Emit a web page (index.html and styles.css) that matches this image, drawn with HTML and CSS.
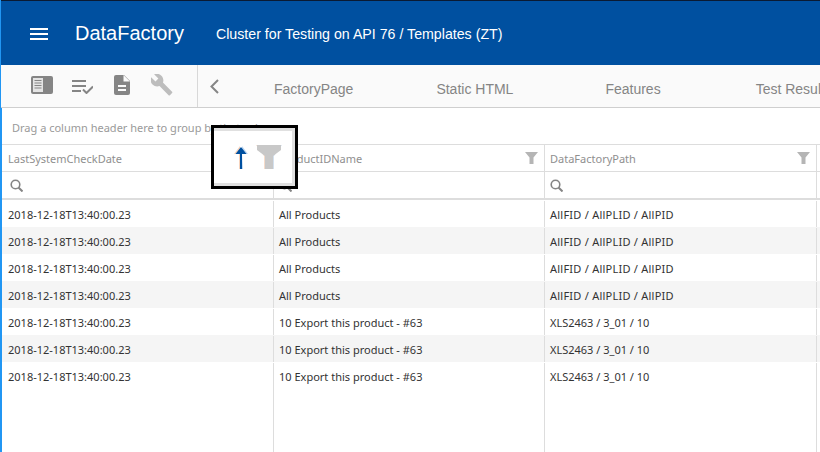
FILE: index.html
```html
<!DOCTYPE html>
<html>
    <head>
        <title>DataFactory</title>
        <meta name="viewport" content="width=device-width, initial-scale=1.0">
        <link rel="stylesheet" href="styles.css">
    </head>
    <body>
        <header class="topbar">
            <svg class="menu-icon" width="18" height="12" viewBox="0 0 18 12"><path d="M0 0h18v2H0zM0 5h18v2H0zM0 10h18v2H0z" fill="#fff"/></svg>
            <span class="brand">DataFactory</span>
            <span class="crumb">Cluster for Testing on API 76 / Templates (ZT)</span>
        </header>
        <nav class="toolbar">
            <div class="tools">
                <svg width="22" height="18" viewBox="0 0 22 18"><rect width="22" height="18" rx="2" fill="#858585"/><rect x="2" y="2" width="10" height="14" fill="#e4e4e4"/><path d="M3.500 4h7v1h-7zM3.500 6.500h7v1h-7zM3.500 9h7v1h-7zM3.500 11.500h7v1h-7z" fill="#858585"/></svg>
                <svg class="tool-check" width="21" height="14" viewBox="0 0 21 14"><path d="M0 0h14v2H0zM0 5h14v2H0zM0 10h9v2H0z" fill="#858585"/><path d="M11 9.500l3.500 3.500L21 6.500" fill="none" stroke="#858585" stroke-width="2"/></svg>
                <svg width="16" height="20" viewBox="0 0 16 20"><path d="M2 0h8l6 6v12a2 2 0 0 1-2 2H2a2 2 0 0 1-2-2V2a2 2 0 0 1 2-2z" fill="#858585"/><path d="M9.500 0v6.500H16" fill="#fafafa"/><path d="M4 10h8v2H4zM4 14h8v2H4z" fill="#fafafa"/></svg>
                <svg width="22" height="22" viewBox="0 0 23 23"><path d="M22 18.500L12.500 9c.9-2.500.4-5.300-1.600-7.300C8.800-.4 5.700-.8 3.200.3l4.500 4.500-3 3L.1 3.300C-1 5.800-.5 8.900 1.600 11c2 2 4.800 2.500 7.300 1.600l9.500 9.500c.4.400 1 .4 1.400 0l2.200-2.200c.5-.4.500-1 0-1.400z" fill="#bdbdbd"/></svg>
            </div>
            <div class="tabs">
                <svg class="tab-back" width="9" height="15" viewBox="0 0 9 15"><path d="M8 1L1.500 7.500 8 14" fill="none" stroke="#858585" stroke-width="2"/></svg>
                <span class="tab tab-factory">FactoryPage</span>
                <span class="tab tab-static">Static HTML</span>
                <span class="tab tab-features">Features</span>
                <span class="tab tab-results">Test Results</span>
            </div>
        </nav>
        <div class="group-panel">Drag a column header here to group by that column</div>
        <div class="grid">
            <div class="row head">
                <div class="cell c1">LastSystemCheckDate</div>
                <div class="cell c2">ProductIDName<svg class="funnel" width="13" height="12" viewBox="0 0 13 12"><path d="M0 0h13L8.500 5.500V12h-4V5.500z" fill="#b5b5b5"/></svg></div>
                <div class="cell c3">DataFactoryPath<svg class="funnel" width="13" height="12" viewBox="0 0 13 12"><path d="M0 0h13L8.500 5.500V12h-4V5.500z" fill="#b5b5b5"/></svg></div>
                <div class="cell c4"></div>
            </div>
            <div class="row search">
                <div class="cell c1"><svg width="13" height="13" viewBox="0 0 13 13"><circle cx="5.500" cy="5.500" r="4.300" fill="none" stroke="#858585" stroke-width="1.600"/><path d="M8.500 8.500l4 4" stroke="#858585" stroke-width="2"/></svg></div>
                <div class="cell c2"><svg width="13" height="13" viewBox="0 0 13 13"><circle cx="5.500" cy="5.500" r="4.300" fill="none" stroke="#858585" stroke-width="1.600"/><path d="M8.500 8.500l4 4" stroke="#858585" stroke-width="2"/></svg></div>
                <div class="cell c3"><svg width="13" height="13" viewBox="0 0 13 13"><circle cx="5.500" cy="5.500" r="4.300" fill="none" stroke="#858585" stroke-width="1.600"/><path d="M8.500 8.500l4 4" stroke="#858585" stroke-width="2"/></svg></div>
                <div class="cell c4"></div>
            </div>
            <div class="row data"><div class="cell c1">2018-12-18T13:40:00.23</div><div class="cell c2">All Products</div><div class="cell c3 all-path">AllFID / AllPLID / AllPID</div><div class="cell c4"></div></div>
            <div class="row data alt"><div class="cell c1">2018-12-18T13:40:00.23</div><div class="cell c2">All Products</div><div class="cell c3 all-path">AllFID / AllPLID / AllPID</div><div class="cell c4"></div></div>
            <div class="row data"><div class="cell c1">2018-12-18T13:40:00.23</div><div class="cell c2">All Products</div><div class="cell c3 all-path">AllFID / AllPLID / AllPID</div><div class="cell c4"></div></div>
            <div class="row data alt"><div class="cell c1">2018-12-18T13:40:00.23</div><div class="cell c2">All Products</div><div class="cell c3 all-path">AllFID / AllPLID / AllPID</div><div class="cell c4"></div></div>
            <div class="row data"><div class="cell c1">2018-12-18T13:40:00.23</div><div class="cell c2">10 Export this product - #63</div><div class="cell c3">XLS2463 / 3_01 / 10</div><div class="cell c4"></div></div>
            <div class="row data alt"><div class="cell c1">2018-12-18T13:40:00.23</div><div class="cell c2">10 Export this product - #63</div><div class="cell c3">XLS2463 / 3_01 / 10</div><div class="cell c4"></div></div>
            <div class="row data"><div class="cell c1">2018-12-18T13:40:00.23</div><div class="cell c2">10 Export this product - #63</div><div class="cell c3">XLS2463 / 3_01 / 10</div><div class="cell c4"></div></div>
            <div class="row filler"><div class="cell c1"></div><div class="cell c2"></div><div class="cell c3"></div><div class="cell c4"></div></div>
        </div>
        <div class="callout">
            <svg width="14" height="23" viewBox="0 0 14 23"><path d="M5 8H0L6 0v23H5z" fill="#f6d3bc"/><path d="M8 8h6L8 0v23h1z" fill="#bcd6f0"/><path d="M6 23V8H1.500L7 1l5.500 7H8v15z" fill="#0050a0"/></svg>
            <svg width="26" height="24" viewBox="0 0 26 24"><path d="M0 0h2l8 10v14H8V11z" fill="#f6dccb"/><path d="M26 0h-2l-8 10v14h2V11z" fill="#d3e0ee"/><path d="M1 0h24v5l-8 6v13H9V11L1 5z" fill="#c8c8c8"/></svg>
        </div>
    </body>
</html>
```

FILE: styles.css
```css
* {
    box-sizing: border-box;
}

html, body {
    height: 100%;
}

body {
    display: flex;
    flex-direction: column;
    margin: 0px;
    overflow: hidden;
    position: relative;
    background: white;
    border-left: 1px solid #2196f3;
    font-family: "Noto Sans", sans-serif;
}

.topbar {
    flex: 0 0 65px;
    display: flex;
    align-items: center;
    padding-left: 29px;
    background: #0050a0;
    border-top: 1px solid #0a1a33;
    color: white;
    font-family: "Liberation Sans", sans-serif;
}

.menu-icon {
    margin-top: 1px;
}

.brand {
    margin-left: 27px;
    font-size: 20px;
}

.crumb {
    margin-left: 32px;
    margin-top: 2px;
    font-size: 14.200px;
}

.toolbar {
    flex: 0 0 43px;
    display: flex;
    background: #fafafa;
    border-bottom: 1px solid #cfcfcf;
    font-family: "Liberation Sans", sans-serif;
}

.tools {
    flex: 0 0 196px;
    display: flex;
    align-items: center;
    gap: 21px;
    padding-left: 30px;
    padding-bottom: 3px;
}

.tool-check {
    margin-left: -2px;
    margin-top: 5px;
}

.tabs {
    flex: 1;
    display: flex;
    align-items: center;
    border-left: 1px solid #d8d8d8;
    white-space: nowrap;
    overflow: hidden;
    padding-left: 12px;
}

.tabs > * {
    flex-shrink: 0;
}

.tab {
    margin-top: 5px;
    font-size: 14px;
    color: #858585;
}

.tab-factory {
    margin-left: 55px;
}

.tab-static {
    margin-left: 83px;
}

.tab-features {
    margin-left: 92px;
}

.tab-results {
    margin-left: 95px;
}

.group-panel {
    flex: 0 0 36px;
    padding: 12px 0 0 10px;
    border-left: 1px solid #2196f3;
    font-size: 11px;
    color: #9a9a9a;
    white-space: nowrap;
}

.grid {
    flex: 1;
    display: flex;
    flex-direction: column;
    border-left: 1px solid #2196f3;
    font-size: 11px;
    color: #333;
}

.row {
    display: flex;
}

.cell {
    display: flex;
    align-items: center;
    padding-left: 5px;
    border-right: 1px solid #ddd;
    white-space: nowrap;
}

.c1 {
    flex: 0 0 272px;
    padding-left: 6px;
}

.c2 {
    flex: 0 0 271px;
}

.c3 {
    flex: 0 0 272px;
}

.c4 {
    flex: 1;
    border-right: 0;
}

.all-path {
    letter-spacing: 0.240px;
}

.head {
    height: 28px;
    border-top: 1px solid #ddd;
    border-bottom: 1px solid #ddd;
    color: #8f8f8f;
}

.funnel {
    margin-left: auto;
    margin-right: 6px;
}

.search {
    height: 28px;
    border-bottom: 2px solid #ddd;
}

.search .c1 svg {
    margin-left: 2px;
}

.data {
    height: 27px;
    padding-top: 1px;
}

.alt {
    background: #f5f5f5;
}

.filler {
    flex: 1;
}

.callout {
    position: absolute;
    left: 210px;
    top: 125px;
    width: 87px;
    height: 64px;
    display: flex;
    align-items: center;
    gap: 8px;
    padding-left: 20px;
    background: white;
    border: 3px solid black;
    box-shadow: inset 0 3px 0 #e0e0e0, inset -3px 0 0 #e0e0e0, inset 0 -3px 0 #e0e0e0;
}
```
